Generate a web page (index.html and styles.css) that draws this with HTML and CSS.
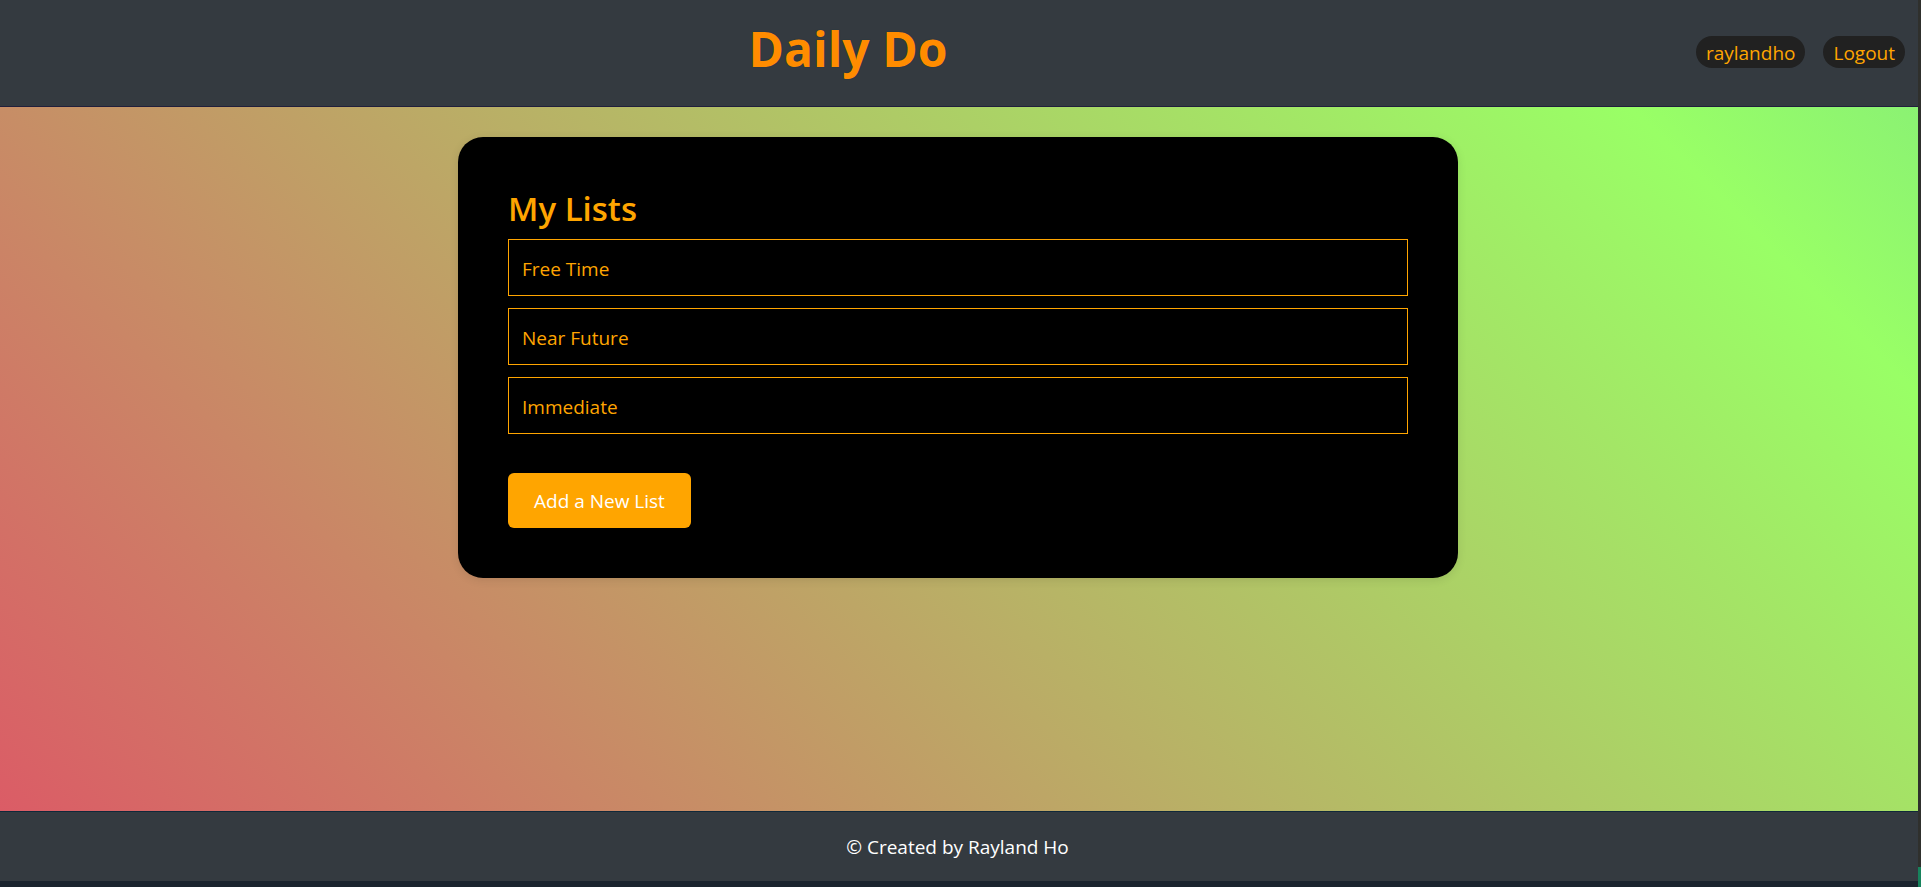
FILE: index.html
```html
<!DOCTYPE html>
<html lang="en">
<head>
<meta charset="utf-8">
<title>Daily Do</title>
<link rel="stylesheet" href="styles.css">
</head>
<body>
<div class="app">
  <header class="header">
    <h1 class="brand">Daily Do</h1>
    <nav class="nav">
      <a class="pill" href="#profile">raylandho</a>
      <a class="pill" href="#logout">Logout</a>
    </nav>
  </header>
  <main class="main">
    <section class="card">
      <h2 class="card-title">My Lists</h2>
      <ul class="lists">
        <li><a class="list-link" href="#free-time">Free Time</a></li>
        <li><a class="list-link" href="#near-future">Near Future</a></li>
        <li><a class="list-link" href="#immediate">Immediate</a></li>
      </ul>
      <button class="add" type="button">Add a New List</button>
    </section>
  </main>
  <footer class="footer">© Created by Rayland Ho</footer>
</div>
</body>
</html>
```
FILE: styles.css
```css
* {
  box-sizing: border-box;
}

body {
  margin: 0;
  background: linear-gradient(to top, #17825c 20px, #2f302d 20px);
  font-family: "Segoe UI", "Open Sans", "Noto Sans", sans-serif;
  font-size: 19px;
  line-height: 30px;
}

.app {
  display: flex;
  flex-direction: column;
  min-height: 100vh;
  margin-right: 3px;
  border-bottom: 6px solid #1b242e;
}

.header {
  display: grid;
  grid-template-columns: 1fr auto;
  align-items: start;
  padding: 17px 13px 25px 0;
  border-bottom: 1px solid #211f3c;
  background: #343a40;
}

.brand {
  margin: 0;
  color: #ff8c00;
  font-size: 48px;
  font-weight: 700;
  line-height: 64px;
  text-align: center;
  text-shadow: 0 0 1px #003344;
}

.nav {
  display: flex;
  gap: 18px;
  padding-top: 19px;
}

.pill {
  padding: 2px 10px 0;
  border-radius: 16px;
  background: #212121;
  color: #ffa500;
  text-decoration: none;
}

.main {
  flex: 1;
  padding: 30px 22px 30px 20px;
  background: linear-gradient(45deg, #db5c66, #99ff66 89%, #8bf273);
}

.card {
  max-width: 1000px;
  margin: 0 auto;
  padding: 50px;
  border-radius: 25px;
  background: #000;
  box-shadow: 0 2px 10px rgba(0, 0, 0, 0.1);
}

.card-title {
  margin: 0 0 8px;
  color: #ffa500;
  font-size: 33px;
  font-weight: 600;
  line-height: 44px;
}

.lists {
  display: grid;
  gap: 12px;
  margin: 0 0 39px;
  padding: 0;
  list-style: none;
}

.list-link {
  display: block;
  padding: 14px 13px 11px;
  border: 1px solid #ffa500;
  color: #ffa500;
  text-decoration: none;
}

.add {
  display: block;
  padding: 13px 26px 12px;
  border: 0;
  border-radius: 6px;
  background: #ffa500;
  color: #fff;
  font: inherit;
}

.footer {
  padding: 20px 3px 19px 0;
  border-top: 1px solid #10283a;
  background: #343a40;
  color: #fff;
  text-align: center;
}
```
